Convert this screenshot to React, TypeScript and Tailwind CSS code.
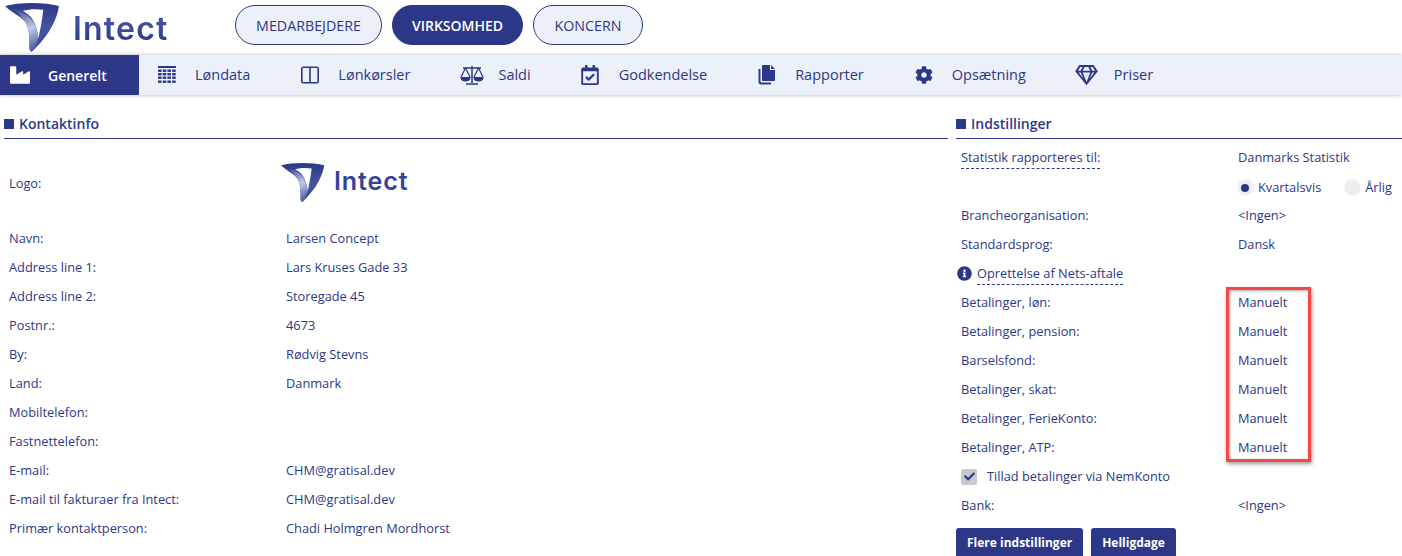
import React from "react";
import { FaIndustry, FaCog, FaRegCalendarCheck, FaRegGem, FaCheck, FaInfoCircle } from "react-icons/fa";

const NAVY = "#2c3887";

function Mark({ className }: { className: string }) {
  return (
    <svg viewBox="0 0 56 51" className={className}>
      <defs>
        <linearGradient id="mA" x1="0" y1="0" x2="0" y2="1">
          <stop offset="0" stopColor="#2c3887" />
          <stop offset="0.5" stopColor="#46549f" />
          <stop offset="1" stopColor="#3a479a" />
        </linearGradient>
        <linearGradient id="mB" x1="0.2" y1="0" x2="0.5" y2="1">
          <stop offset="0" stopColor="#3c4a98" />
          <stop offset="0.55" stopColor="#c3c9e4" />
          <stop offset="1" stopColor="#5563ac" />
        </linearGradient>
      </defs>
      <path d="M0 3C15 -1 40 -1 55 3C53 17 45 32 31 46C28 50 26 51 25 47C25 37 25 27 21 20C17 14 7 10 0 3Z" fill="url(#mA)" />
      <path d="M18 8C25 6 33 6 39 7C38 17 36 27 34 36C33 28 31 20 26 14C24 12 21 10 18 8Z" fill="#ffffff" />
      <path d="M8 6C16 8 24 12 28 18C32 25 34 32 34 36L30 46C28 50 26 51 25 47C25 37 25 27 21 20C18 15 13 10 8 6Z" fill="url(#mB)" />
    </svg>
  );
}

function Logo() {
  return (
    <div className="flex items-center">
      <Mark className="w-[55px] h-[50px] ml-[5px] mt-[3px] mb-[2px]" />
      <span className="ml-[13px] mt-[3px] text-[32px] tracking-[1.2px] leading-none font-semibold bg-linear-to-b from-[#4b59a8] to-[#2c3887] bg-clip-text text-transparent [font-family:Inter,sans-serif]">
        Intect
      </span>
    </div>
  );
}

function SmallLogo() {
  return (
    <div className="flex items-center">
      <Mark className="w-[44px] h-[40px]" />
      <span className="ml-[9px] mt-[-2px] text-[25px] tracking-[0.9px] leading-none font-semibold text-[#35429a] [font-family:Inter,sans-serif]">
        Intect
      </span>
    </div>
  );
}

function TopBtn({ label, active, w }: { label: string; active?: boolean; w: string }) {
  return (
    <div
      className={`h-[40px] ${w} rounded-[20px] border border-[#2c3887] flex items-center justify-center ${
        active ? "bg-[#2c3887] text-white font-semibold text-[14px]" : "bg-[#ecf0f9] text-[#2c3887] text-[14.25px] pt-[1px]"
      }`}
    >
      {label}
    </div>
  );
}

const TableIcon = () => (
  <svg viewBox="0 0 18 18" className="w-[18px] h-[18px]" fill={NAVY}>
    <rect x="0" y="0" width="18" height="2" />
    {[3.5, 7, 10.5, 14.5].map((y) =>
      [0, 4.7, 9.4, 14.1].map((x) => <rect key={`${x}-${y}`} x={x} y={y} width="3.6" height="2.4" />)
    )}
  </svg>
);

const ColumnsIcon = () => (
  <svg viewBox="0 0 18 18" className="w-[18px] h-[18px]" fill="none" stroke={NAVY} strokeWidth="1.6">
    <rect x="0.8" y="1.3" width="16.4" height="15.4" rx="1.5" />
    <path d="M9 1.3V16.7" />
  </svg>
);

const ScaleIcon = () => (
  <svg viewBox="0 0 24 20" className="w-[24px] h-[20px]" fill="none" stroke={NAVY} strokeWidth="1.2">
    <path d="M3 3H21M12 1V18M6 19H18" strokeWidth="1.5" />
    <path d="M5.5 3L1 12M5.5 3L10 12M18.5 3L14 12M18.5 3L23 12" />
    <path d="M1 12.5H10C9.5 15.5 7.5 16 5.5 16S1.5 15.5 1 12.5ZM14 12.5H23C22.5 15.5 20.5 16 18.5 16S14.5 15.5 14 12.5Z" fill={NAVY} />
  </svg>
);

const FilesIcon = () => (
  <svg viewBox="0 0 18 20" className="w-[18px] h-[20px]" fill={NAVY}>
    <path d="M5 0H12V5H17V15C17 15.6 16.6 16 16 16H5C4.4 16 4 15.6 4 15V1C4 .4 4.4 0 5 0ZM13 0L17 4H13Z" />
    <path d="M2.5 4V16.5C2.5 17 3 17.5 3.5 17.5H13V19.5H3C1.5 19.5 .5 18.5 .5 17V4Z" />
  </svg>
);

type NavItem = { label: string; icon: React.ReactNode };

const NAV: NavItem[] = [
  { label: "Løndata", icon: <TableIcon /> },
  { label: "Lønkørsler", icon: <ColumnsIcon /> },
  { label: "Saldi", icon: <span className="-ml-[1px]"><ScaleIcon /></span> },
  { label: "Godkendelse", icon: <span className="-ml-[1px]"><FaRegCalendarCheck className="w-[18px] h-[20px]" /></span> },
  { label: "Rapporter", icon: <FilesIcon /> },
  { label: "Opsætning", icon: <FaCog className="w-[18px] h-[18px]" /> },
  { label: "Priser", icon: <span className="-ml-[2px]"><FaRegGem className="w-[23px] h-[20px]" /></span> },
];

const LEFT: [string, string][] = [
  ["Navn:", "Larsen Concept"],
  ["Address line 1:", "Lars Kruses Gade 33"],
  ["Address line 2:", "Storegade 45"],
  ["Postnr.:", "4673"],
  ["By:", "Rødvig Stevns"],
  ["Land:", "Danmark"],
  ["Mobiltelefon:", ""],
  ["Fastnettelefon:", ""],
  ["E-mail:", "CHM@gratisal.dev"],
  ["E-mail til fakturaer fra Intect:", "CHM@gratisal.dev"],
  ["Primær kontaktperson:", "Chadi Holmgren Mordhorst"],
];

const PAY = [
  "Betalinger, løn:",
  "Betalinger, pension:",
  "Barselsfond:",
  "Betalinger, skat:",
  "Betalinger, FerieKonto:",
  "Betalinger, ATP:",
];

function Heading({ label }: { label: string }) {
  return (
    <div className="h-[31px] border-b border-[#2c3887] flex items-center gap-[5px] pt-[1px] text-[14px] font-semibold text-[#2c3887]">
      <span className="w-[10px] h-[10px] bg-[#2c3887]" />
      {label}
    </div>
  );
}

function Row({ label, value }: { label: React.ReactNode; value?: string }) {
  return (
    <div className="h-[29px] flex items-center">
      <div className="w-[277px] shrink-0">{label}</div>
      <div>{value}</div>
    </div>
  );
}

function Radio({ label, on }: { label: string; on?: boolean }) {
  return (
    <div className="flex items-center gap-[5px]">
      <span className="w-[15px] h-[15px] rounded-full bg-[#eeeeee] shadow-[0_0_2px_rgba(0,0,0,0.15)] flex items-center justify-center">
        {on && <span className="w-[8px] h-[8px] rounded-full bg-[#2c3887]" />}
      </span>
      {label}
    </div>
  );
}

function Btn({ label }: { label: string }) {
  return (
    <div className="h-[30px] px-[11px] rounded-[3px] bg-[#2c3887] text-white font-bold text-[12px] flex items-center">
      {label}
    </div>
  );
}

export default function App() {
  return (
    <div className="w-[1402px] h-[556px] overflow-hidden bg-white text-[#2c3887] text-[12.8px] [font-family:'Open_Sans',sans-serif]">
      <header className="h-[55px] flex">
        <div className="w-[235px] shrink-0">
          <Logo />
        </div>
        <div className="flex gap-[10px] mt-[5px]">
          <TopBtn label="MEDARBEJDERE" w="w-[147px]" />
          <TopBtn label="VIRKSOMHED" w="w-[131px]" active />
          <TopBtn label="KONCERN" w="w-[110px]" />
        </div>
      </header>

      <nav className="h-[40px] bg-[#ecf0f9] flex items-center shadow-[0_0_4px_rgba(0,0,0,0.3)] text-[14.5px]">
        <div className="h-full w-[139px] bg-[#2c3887] text-white font-semibold text-[14px] flex items-center pl-[9px] shrink-0">
          <FaIndustry className="w-[22px] h-[20px] mr-[17px]" />
          Generelt
        </div>
        <div className="flex items-center gap-[51px] ml-[19px] -mt-[1px] text-[#2c3887]">
          {NAV.map((n) => (
            <div key={n.label} className="flex items-center">
              <span className="w-[37px] flex items-center">{n.icon}</span>
              {n.label}
            </div>
          ))}
        </div>
      </nav>

      <main className="flex pt-[13px]">
        <section className="w-[944px] ml-[4px] shrink-0">
          <Heading label="Kontaktinfo" />
          <div className="pl-[5px]">
            <div className="h-[85px] flex items-center">
              <div className="w-[272px] shrink-0 pt-[4px]">Logo:</div>
              <div className="mt-[2px]">
                <SmallLogo />
              </div>
            </div>
            {LEFT.map(([l, v]) => (
              <Row key={l} label={l} value={v} />
            ))}
          </div>
        </section>

        <section className="flex-1 ml-[8px] relative">
          <Heading label="Indstillinger" />
          <div className="pl-[5px] pt-[4px]">
            <Row
              label={<span className="border-b border-dashed border-[#2c3887] pb-[2px]">Statistik rapporteres til:</span>}
              value="Danmarks Statistik"
            />
            <div className="h-[29px] flex items-center justify-end gap-[24px] pr-[10px] pt-[2px]">
              <Radio label="Kvartalsvis" on />
              <Radio label="Årlig" />
            </div>
            <Row label="Brancheorganisation:" value="<Ingen>" />
            <Row label="Standardsprog:" value="Dansk" />
            <div className="h-[29px] flex items-center gap-[5px] -ml-[4px]">
              <FaInfoCircle className="w-[15px] h-[15px]" />
              <div>
                <span className="border-b border-dashed border-[#2c3887] pb-[2px]">Oprettelse af Nets-aftale</span>
              </div>
            </div>
            {PAY.map((l) => (
              <Row key={l} label={l} value="Manuelt" />
            ))}
            <div className="h-[29px] flex items-center gap-[10px]">
              <span className="w-[16px] h-[16px] rounded-[2px] bg-[#c9c9d0] flex items-center justify-center">
                <FaCheck className="w-[11px] h-[11px]" />
              </span>
              Tillad betalinger via NemKonto
            </div>
            <Row label="Bank:" value="<Ingen>" />
            <div className="flex gap-[8px] -ml-[5px] mt-[8px]">
              <Btn label="Flere indstillinger" />
              <Btn label="Helligdage" />
            </div>
          </div>
          <div className="absolute left-[270px] top-[179px] w-[85px] h-[175px] border-[3px] border-[#f44747] shadow-[inset_1px_1px_3px_rgba(0,0,0,0.35),1px_2px_4px_rgba(0,0,0,0.4)]" />
        </section>
      </main>
    </div>
  );
}
